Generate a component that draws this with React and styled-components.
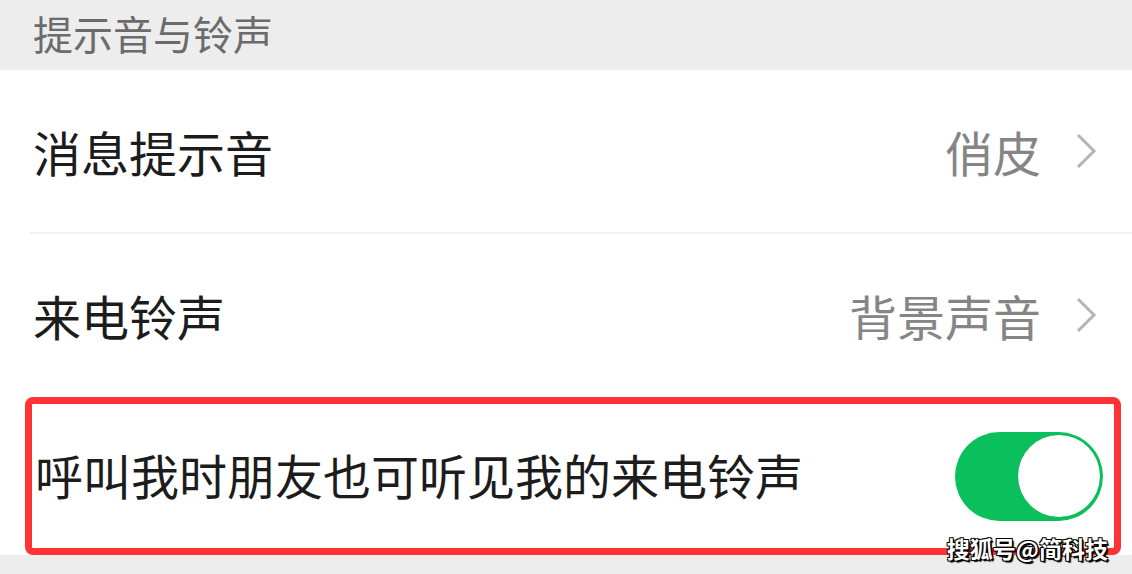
import React, { useState } from 'react';
import styled, { createGlobalStyle } from 'styled-components';

const GlobalStyle = createGlobalStyle`
  html, body {
    margin: 0;
    padding: 0;
    background: #ededed;
  }
  * {
    box-sizing: border-box;
  }
`;

const Page = styled.div`
  position: relative;
  width: 1132px;
  height: 574px;
  overflow: hidden;
  background: #ededed;
  font-family: "Noto Sans CJK SC", "Noto Sans", sans-serif;
`;

const SectionHeader = styled.div`
  height: 70px;
  display: flex;
  align-items: center;
  padding: 0 0 4px 33px;
  font-size: 40px;
  line-height: 1;
  color: #6b6b6b;
`;

const List = styled.div`
  background: #fff;
  display: flex;
  flex-direction: column;
`;

const Cell = styled.div`
  height: 162px;
  display: flex;
  align-items: center;
  justify-content: space-between;
  padding: 0 35px 0 33px;
`;

const Label = styled.span`
  font-size: 48px;
  line-height: 1;
  color: #1c1c1c;
`;

const ValueGroup = styled.div`
  display: flex;
  align-items: center;
  gap: 34px;
`;

const Value = styled.span`
  font-size: 48px;
  line-height: 1;
  color: #858585;
`;

const Divider = styled.div`
  height: 2px;
  margin-left: 30px;
  background: #f1f1f1;
`;

const Spacer = styled.div`
  height: 1px;
`;

const HighlightCell = styled.div`
  height: 158px;
  margin: 0 11px 0 25px;
  border: 7px solid #ff3236;
  border-radius: 8px;
  display: flex;
  align-items: center;
  justify-content: space-between;
  padding: 0 11px 4px 3px;
`;

const Track = styled.button`
  position: relative;
  width: 148px;
  height: 89px;
  border: none;
  padding: 0;
  margin-top: 4px;
  border-radius: 45px;
  background: ${({ $on }) => ($on ? '#09c05d' : '#e5e5e5')};
  cursor: pointer;
`;

const Knob = styled.span`
  position: absolute;
  top: 3px;
  left: ${({ $on }) => ($on ? '63px' : '3px')};
  width: 82px;
  height: 82px;
  border-radius: 50%;
  background: #fff;
  box-shadow: 0 0 1px rgba(0, 0, 0, 0.25);
`;

const Watermark = styled.div`
  position: absolute;
  right: 24px;
  bottom: 14px;
  font-size: 23px;
  font-weight: 700;
  line-height: 1;
  color: #fff;
  text-shadow: 1px 1px 0 #000, -1px -1px 0 #000, 1px -1px 0 #000, -1px 1px 0 #000, 2px 2px 1px #000;
`;

const Chevron = () => (
  <svg width="22" height="36" viewBox="0 0 22 36">
    <polyline points="3,2 19,18 3,34" fill="none" stroke="#b4b4b4" strokeWidth="3" />
  </svg>
);

const Switch = ({ on, onToggle }) => (
  <Track $on={on} onClick={onToggle} aria-pressed={on}>
    <Knob $on={on} />
  </Track>
);

const rows = [
  { label: '消息提示音', value: '俏皮' },
  { label: '来电铃声', value: '背景声音' },
];

export default function App() {
  const [letFriendsHear, setLetFriendsHear] = useState(true);

  return (
    <Page>
      <GlobalStyle />
      <SectionHeader>提示音与铃声</SectionHeader>
      <List>
        {rows.map((row, i) => (
          <React.Fragment key={row.label}>
            {i > 0 && <Divider />}
            <Cell>
              <Label>{row.label}</Label>
              <ValueGroup>
                <Value>{row.value}</Value>
                <Chevron />
              </ValueGroup>
            </Cell>
          </React.Fragment>
        ))}
        <Spacer />
        <HighlightCell>
          <Label>呼叫我时朋友也可听见我的来电铃声</Label>
          <Switch on={letFriendsHear} onToggle={() => setLetFriendsHear(!letFriendsHear)} />
        </HighlightCell>
      </List>
      <Watermark>搜狐号@简科技</Watermark>
    </Page>
  );
}
